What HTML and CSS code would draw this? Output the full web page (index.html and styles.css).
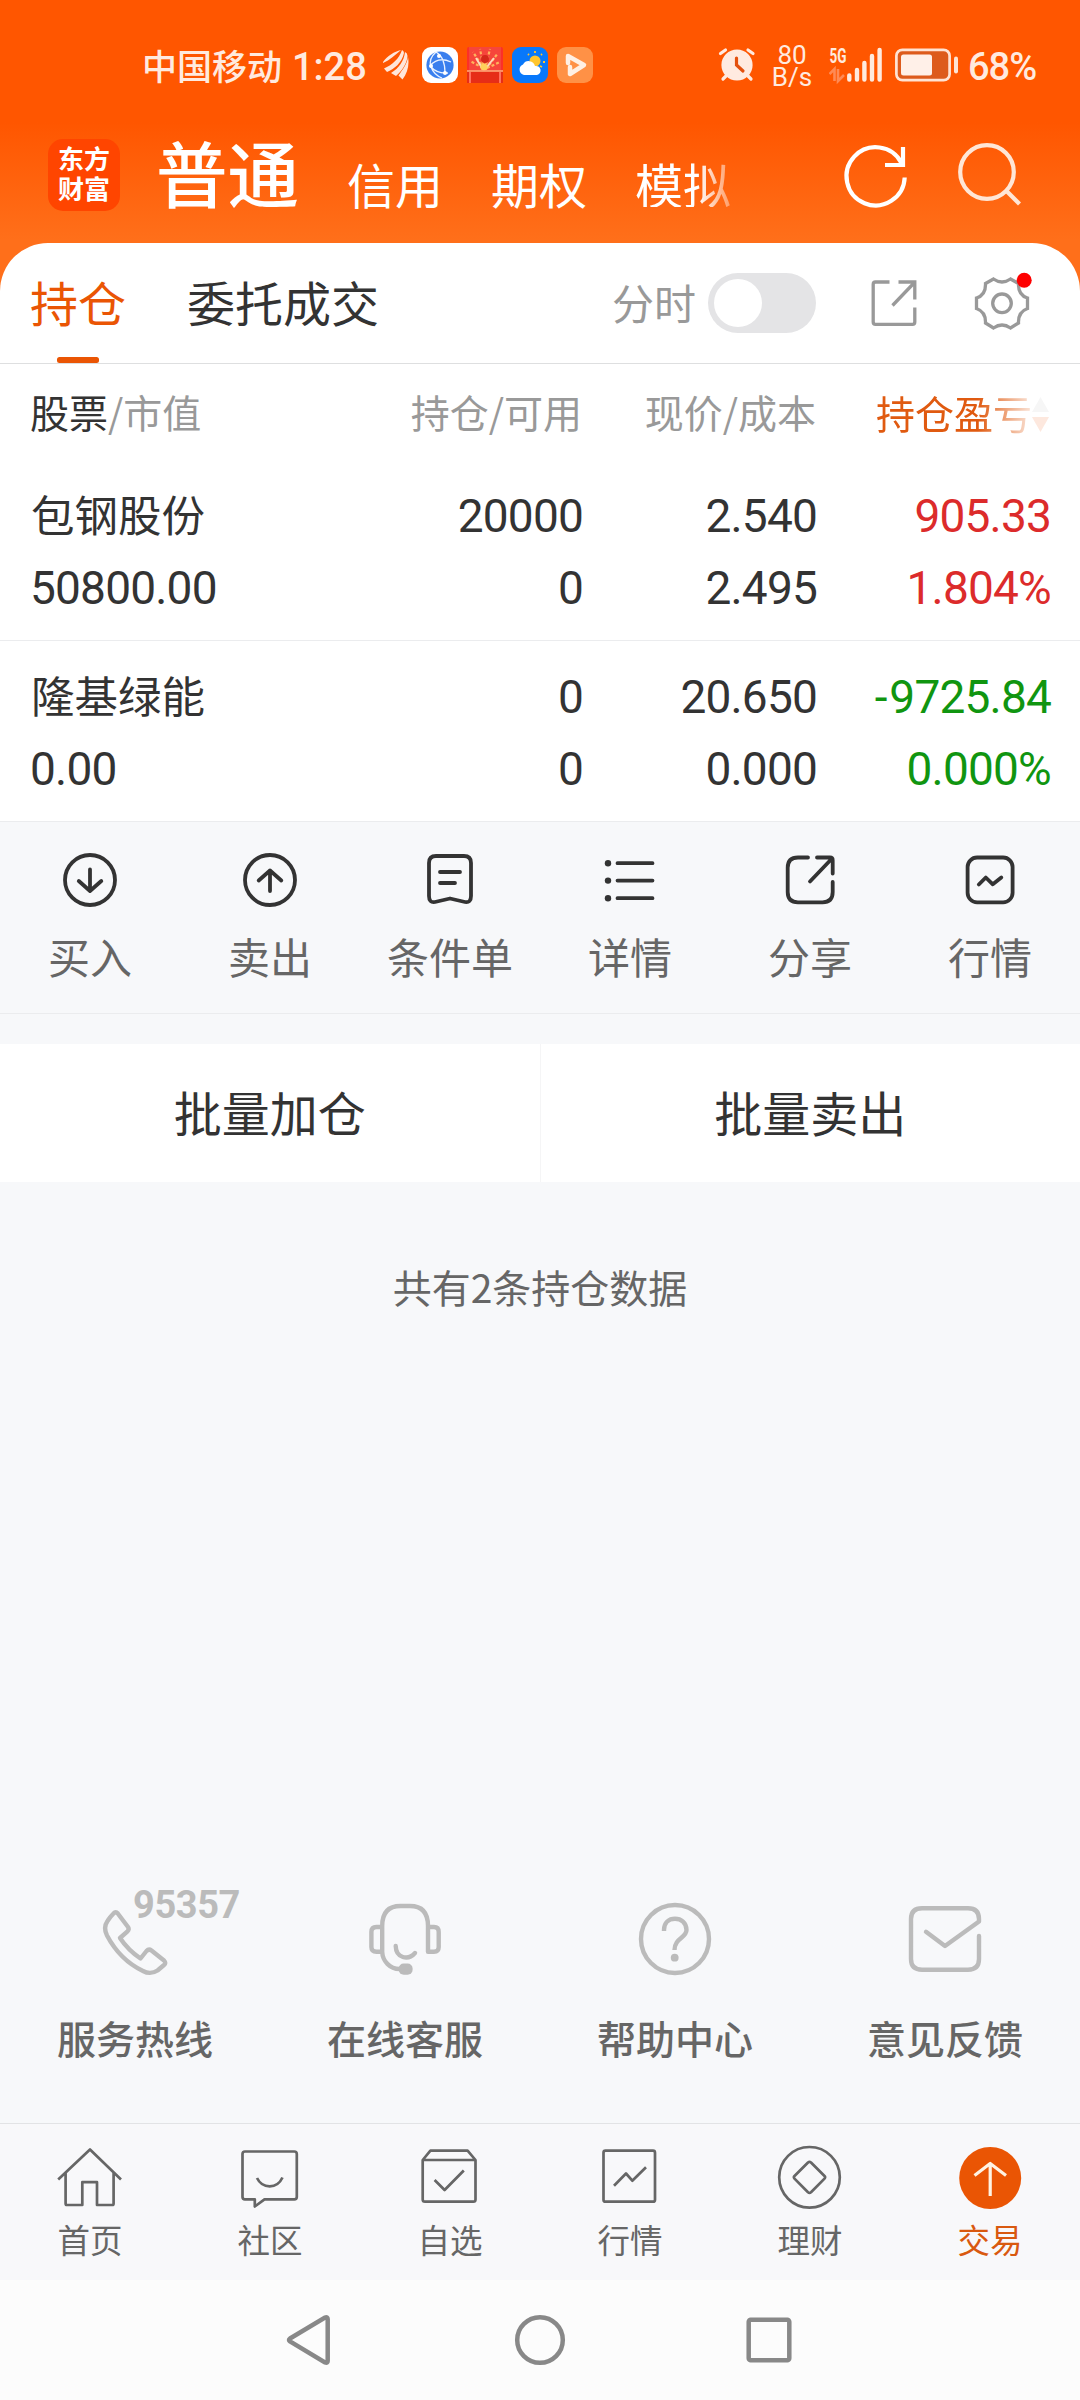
FILE: index.html
```html
<!DOCTYPE html>
<html lang="zh-CN">
<head>
<meta charset="utf-8">
<title>持仓</title>
<link rel="stylesheet" href="styles.css">
</head>
<body>
<div class="screen">
  <header class="top">
    <div class="status">
      <span class="carrier">中国移动</span>
      <span class="clock">1:28</span>
      <svg class="leaf" width="26" height="32" viewBox="383 50 26 32" fill="#ffe6da"><path d="M383 63C388 56 394 53 401 51C395 56 390 61 383 64Z"/><path d="M384 69.500C392 66 399 60 402 51Q404 52 404 54C402 64 394 70 387 73Z"/><path d="M391 74C399 69 404 62 405 53Q407.500 54 407.500 57C407 65 401 73 396 77Z"/><path d="M398.500 76.500C403 70 407 65 408 58C409.500 66 407.500 74 402.500 80.500Z"/></svg>
      <div class="apps">
        <svg width="36" height="36" viewBox="0 0 36 36"><rect width="36" height="36" rx="9" fill="#fff"/><circle cx="18" cy="18" r="13.6" fill="#3a7fee"/><path d="M14 5Q23 10 23 26M8 19Q16 9 29 15M8 19Q15 27 26 26M14 5Q6 12 9 20T20 31" fill="none" stroke="#e9f2ff" stroke-width="1.3"/><g fill="#fff"><circle cx="17" cy="9" r="2"/><circle cx="9" cy="19" r="2"/><circle cx="23" cy="26" r="2"/></g></svg>
        <svg width="36" height="36" viewBox="0 0 36 36"><rect width="36" height="36" rx="2" fill="#fb3029"/><path d="M2 0h32v24H2z" fill="#f6453b"/><path d="M17 22L6 5M17 22L13 2M18 22L23 2M19 22L31 6M16 21L3 14M20 21L33 15" stroke="#ffb35c" stroke-width="2.2" stroke-dasharray="3 2"/><path d="M15 21L9 11M19 21L27 11" stroke="#fdd9bd" stroke-width="2"/><circle cx="18" cy="12" r="4" fill="#d5281a"/><circle cx="17" cy="20" r="3.6" fill="#ffd05a"/><path d="M0 24h36v12H0z" fill="#e62d17"/><path d="M0 24h36" stroke="#ffae7d" stroke-width="1.5"/><path d="M3 25v11M33 25v11" stroke="#ff705d" stroke-width="2"/></svg>
        <svg width="36" height="36" viewBox="0 0 36 36"><rect width="36" height="36" rx="9" fill="#0878fb"/><circle cx="23" cy="14" r="5.5" fill="#ffc52e"/><path d="M23 6V4M29 8l1-1M31 15h2M17 8l-1-1M28 19l2 1" stroke="#ffc52e" stroke-width="1.8"/><path d="M12 28a5.500 5.500 0 0 1-1-10.500 6.500 6.500 0 0 1 12 1.500 4.600 4.600 0 0 1 2 9z" fill="#fff"/></svg>
        <svg width="36" height="36" viewBox="0 0 36 36"><rect width="36" height="36" rx="9" fill="#ff9146"/><path d="M11 16V9L27 18 13 27V20" fill="none" stroke="#fff0e4" stroke-width="4.5" stroke-linejoin="round" stroke-linecap="round"/></svg>
      </div>
      <div class="status-right">
        <svg width="38" height="36" viewBox="718 48 38 36" fill="#ffeae0" stroke-linecap="round"><circle cx="737" cy="66" r="15.600"/><path d="M720.500 54.500l5-3.500M753 54.500l-5-3.500M726 77l-3 3M748 77l3 3" stroke="#ffeae0" stroke-width="3.200"/><path d="M736.500 59v7l6.500 6" fill="none" stroke="#e4500e" stroke-width="3.200"/></svg>
        <div class="speed"><span>80</span><span>B/s</span></div>
        <svg class="signal" width="54" height="42" viewBox="829 44 54 42"><text x="829.500" y="62.700" class="net" textLength="17" lengthAdjust="spacingAndGlyphs">5G</text><path d="M829.500 74l5-5v12M838 69v12l6-6" fill="none" stroke="#ff8a55" stroke-width="2.600"/><path d="M849.300 75.500v4M857 70v9.500M864.400 63v16.500M872 56v23.500M879.600 50v29.500" stroke="#ffeade" stroke-width="4.400" stroke-linecap="round"/></svg>
        <svg class="battery" width="64" height="34" viewBox="895 48.500 64 34"><rect x="896.400" y="50.300" width="53.200" height="30.400" rx="6" fill="#dd5b1c" stroke="#ffe3d3" stroke-width="2.700"/><rect x="901" y="55" width="31" height="21" rx="2.500" fill="#fff0e8"/><rect x="954" y="57" width="4" height="17" rx="2" fill="#ffe3d3"/></svg>
        <span class="percent">68%</span>
      </div>
    </div>
    <div class="navrow">
      <div class="logo"><span>东方</span><span>财富</span></div>
      <nav class="accounts"><span class="current">普通</span><span>信用</span><span>期权</span><span class="fade">模拟</span></nav>
      <svg class="tools" width="200" height="100" viewBox="840 130 200 100" fill="none" stroke-width="4.200"><path d="M904.700 177.500A29.100 29.100 0 1 1 901.500 163M885 165H903V147" stroke="#fff"/><g stroke="#ffe6d6"><circle cx="987" cy="172" r="26.800"/><path d="M1006 190.500L1019.500 204"/></g></svg>
    </div>
  </header>

  <main class="panel">
    <div class="tabs">
      <span class="tab active">持仓</span>
      <span class="tab">委托成交</span>
      <span class="mini">分时</span>
      <span class="toggle"><i></i></span>
      <svg class="tabicons" width="172" height="80" viewBox="860 263 172 80" fill="none" stroke="#999" stroke-width="3.300"><path d="M889.500 282H875.500q-2.300 0-2.300 2.300v37.700q0 2.300 2.300 2.300h37q2.300 0 2.300-2.300V307.500M898.500 282h16.300v17.500M914 283L892.500 305.500"/><path d="M993.500 279Q1002 285 1010.500 279L1018.500 283.500Q1018 295 1027.500 298V308.500Q1018 312 1018.500 323L1010.500 328Q1002 322 993.500 328L985.500 323Q986 312 976.500 308.500V298Q986 295 985.500 283.500Z"/><circle cx="1002" cy="303.300" r="9.300"/><circle cx="1024.200" cy="280.300" r="7.500" fill="#fe0000" stroke="none"/></svg>
    </div>
    <div class="grid head">
      <span><b>股票</b>/市值</span><span>持仓/可用</span><span>现价/成本</span>
      <span class="sort"><em>持仓盈亏</em><svg width="17" height="36" viewBox="0 0 17 36"><path d="M8.500 0L17 15H0z" fill="#f6f6f6"/><path d="M0 20h17L8.500 35z" fill="#fde8de"/></svg></span>
    </div>
    <div class="grid stock">
      <span class="name">包钢股份</span><span>20000</span><span>2.540</span><span class="up">905.33</span>
      <span>50800.00</span><span>0</span><span>2.495</span><span class="up">1.804%</span>
    </div>
    <div class="grid stock">
      <span class="name">隆基绿能</span><span>0</span><span>20.650</span><span class="down"><i class="minus">-</i>9725.84</span>
      <span>0.00</span><span>0</span><span>0.000</span><span class="down">0.000%</span>
    </div>
  </main>

  <div class="actions">
    <div class="action"><svg viewBox="0 840 180 80"><circle cx="90" cy="880" r="25"/><path d="M90 869.500V890.500M78.800 881L90 891 101.300 881"/></svg><span>买入</span></div>
    <div class="action"><svg viewBox="180 840 180 80"><circle cx="270" cy="880" r="25"/><path d="M270 891V870.500M258.700 880.500L270 870.500 281.300 880.500"/></svg><span>卖出</span></div>
    <div class="action"><svg viewBox="360 840 180 80"><path d="M429 863q0-7 7-7h28q7 0 7 7v33q0 7-6 6l-15-3.500-15 3.500q-6 1-6-6zM440 872H460M440 883H455"/></svg><span>条件单</span></div>
    <div class="action"><svg viewBox="540 840 180 80"><path d="M617.500 863.200H652.500M617.500 880.600H652.500M617.500 898.200H652.500"/><g fill="#333" stroke="none"><circle cx="608" cy="863.200" r="3.200"/><circle cx="608" cy="880.600" r="3.200"/><circle cx="608" cy="898.200" r="3.200"/></g></svg><span>详情</span></div>
    <div class="action"><svg viewBox="720 840 180 80"><path d="M808 857.500H798q-10.300 0-10.300 10.300V892q0 10.300 10.300 10.300H822.500q10.200 0 10.200-10.300V882M817 857.500h13q2.700 0 2.700 2.700V873.500M831.500 859L810 881.500"/></svg><span>分享</span></div>
    <div class="action"><svg viewBox="900 840 180 80"><rect x="967.600" y="857.500" width="45" height="44.800" rx="9.500"/><path d="M978.800 884.500L985.800 877.500 992.800 884.300 1001.300 877.500"/></svg><span>行情</span></div>
  </div>

  <div class="batch"><span>批量加仓</span><span>批量卖出</span></div>
  <p class="summary">共有2条持仓数据</p>

  <div class="services">
    <div class="service"><svg viewBox="0 1880 270 120"><path d="M113.500 1913.500Q115.700 1911 117.800 1913.500L128 1927Q129.500 1929.500 127.500 1931.300L120 1938Q128 1950 140.500 1958.500L146.500 1951Q148.800 1948.500 151.500 1950.500L164 1960.500Q166.500 1963 164 1965L157.500 1970.500Q150.500 1975 143 1971Q120 1960 107 1935.500Q103 1927.500 107.500 1921Q110 1917 113.500 1913.500Z"/></svg><b class="hotline">95357</b><span>服务热线</span></div>
    <div class="service"><svg viewBox="270 1880 270 120"><path d="M382.200 1951.700V1926Q382.200 1906 400.500 1906H410Q428 1906 428 1926V1951.700H434Q438.700 1951.700 438.700 1947V1932Q438.700 1927 434 1927H428M382.200 1927H376.500Q371.400 1927 371.400 1932V1947Q371.400 1951.700 376.500 1951.700H382.200C382.500 1961 390 1969 399.500 1969M395.700 1946C396 1958 408 1961 415 1953"/><rect x="398.700" y="1963.600" width="13.900" height="11.200" rx="5" fill="#bbb" stroke="none"/></svg><span>在线客服</span></div>
    <div class="service"><svg viewBox="540 1880 270 120"><circle cx="675" cy="1939" r="34"/><path stroke-linecap="butt" d="M664 1931V1930C664 1922.500 669 1918.700 675 1918.700S686.500 1922.500 686.500 1930C686.500 1938 674.500 1938 674.500 1950"/><circle cx="674.700" cy="1957.700" r="3.900" fill="#bbb" stroke="none"/></svg><span>帮助中心</span></div>
    <div class="service"><svg viewBox="810 1880 270 120"><path d="M979 1936V1959Q979 1969.700 968 1969.700H922Q911 1969.700 911 1959V1919Q911 1908.200 922 1908.200H968Q979 1908.200 979 1919V1921.500L945 1946 926 1931.800"/></svg><span>意见反馈</span></div>
  </div>

  <nav class="bottom">
    <div class="item"><svg viewBox="0 2124 180 96"><path d="M58.200 2179.500L90 2149.500 121 2179.500M65.600 2173V2203.500Q65.600 2205 67 2205H82.300V2182.200H97V2205H112.200Q113.600 2205 113.600 2203.500V2173"/></svg><span>首页</span></div>
    <div class="item"><svg viewBox="180 2124 180 96"><path d="M245 2151.500H294.300Q296.800 2151.500 296.800 2154V2197Q296.800 2199.300 294.300 2199.300H264.500L254.800 2206.500V2199.300H245Q242.500 2199.300 242.500 2197V2154Q242.500 2151.500 245 2151.500ZM257 2178Q261 2186.300 269.700 2186.300T282.500 2177.500"/></svg><span>社区</span></div>
    <div class="item"><svg viewBox="360 2124 180 96"><path d="M422.700 2160L430.400 2150.700H467.600L475.500 2160V2199.500Q475.500 2201.700 473.300 2201.700H425Q422.700 2201.700 422.700 2199.500ZM422.700 2160H475.500M434.600 2180L444.600 2190 463.800 2170.500"/></svg><span>自选</span></div>
    <div class="item"><svg viewBox="540 2124 180 96"><rect x="603.500" y="2150.700" width="51.500" height="51" rx="2"/><path d="M614 2185.700L626 2173.500 632.300 2180.700 646 2167.200"/></svg><span>行情</span></div>
    <div class="item"><svg viewBox="720 2124 180 96"><circle cx="809.500" cy="2177.300" r="30.300"/><path d="M811 2162.500L824.500 2176Q825.700 2177.300 824.500 2178.600L811 2192.300Q809.500 2193.500 808 2192.300L794.500 2178.600Q793.300 2177.300 794.500 2176L808 2162.500Q809.500 2161.300 811 2162.500Z"/></svg><span>理财</span></div>
    <div class="item on"><svg viewBox="900 2124 180 96"><circle cx="990.200" cy="2178" r="31" fill="#ea5504" stroke="none"/><path stroke="#fff3e3" stroke-width="3.200" stroke-linecap="butt" d="M990.200 2163.500V2196M974.500 2175.500L990.200 2163.500 1006 2175.500"/></svg><span>交易</span></div>
  </nav>

  <div class="system">
    <svg width="50" height="60" viewBox="283 2310 50 60"><path d="M290 2338.500L325 2317.500Q327.700 2316.500 327.700 2319V2361Q327.700 2363.500 325 2362.500L290 2341.500Q288 2340 290 2338.500Z"/></svg>
    <svg width="60" height="60" viewBox="510 2310 60 60"><circle cx="540" cy="2340" r="22.800"/></svg>
    <svg width="50" height="60" viewBox="744 2310 50 60"><rect x="748.700" y="2319.700" width="40.600" height="40.600" rx="2"/></svg>
  </div>
</div>
</body>
</html>
```
FILE: styles.css
```css
* { box-sizing: border-box; }

body {
  margin: 0;
  font-family: "Noto Sans CJK SC", sans-serif;
  color: #333;
  background: #f7f8fa;
}

svg { display: block; flex: none; }

.screen {
  width: 1080px;
  height: 2400px;
  display: flex;
  flex-direction: column;
  overflow: hidden;
}

/* Orange header: also shows behind the panel's rounded corners */
.top {
  height: 303px;
  flex: none;
  background: linear-gradient(#ff5600 0, #ff5600 122px, #ff6f1a 240px);
}

.status {
  height: 130px;
  display: flex;
  align-items: center;
  padding: 0 43px 0 142px;
  color: #ffeadf;
  white-space: nowrap;
}
.carrier { font-size: 35px; font-weight: 500; line-height: 40px; width: 150px; }
.clock, .percent { font-family: Roboto, sans-serif; font-size: 38px; font-weight: 500; line-height: 40px; margin-top: 4px; }
.clock { width: 91px; }
.apps { display: flex; gap: 9px; margin-left: 13px; }
.status-right { margin-left: auto; display: flex; align-items: center; }
.speed {
  width: 46px;
  margin-left: 13px;
  display: flex;
  flex-direction: column;
  align-items: center;
  font-family: Roboto, sans-serif;
  font-size: 26px;
  line-height: 22px;
  margin-top: 2px;
}
.signal { margin-left: 14px; }
.net { font: bold 21px Roboto, sans-serif; fill: #ffeade; }
.battery { margin-left: 12px; }
.percent { width: 69px; margin-left: 9px; letter-spacing: -1px; }

.navrow { display: flex; align-items: flex-start; padding-left: 48px; color: #fff; }
.logo {
  width: 72px;
  height: 72px;
  margin-top: 9px;
  border-radius: 15px;
  background: #ff4500;
  display: flex;
  flex-direction: column;
  align-items: center;
  padding-top: 4px;
  font-size: 26px;
  font-weight: 700;
  line-height: 30px;
}
.accounts {
  height: 77px;
  width: 684px;
  display: flex;
  align-items: flex-end;
  gap: 48px;
  margin-left: 36px;
  font-size: 48px;
  line-height: 48px;
  white-space: nowrap;
}
.accounts .current { font-size: 71.5px; line-height: 72px; font-weight: 500; }
.fade { -webkit-mask-image: linear-gradient(90deg, #000 65%, rgba(0, 0, 0, .35)); mask-image: linear-gradient(90deg, #000 65%, rgba(0, 0, 0, .35)); }

.panel {
  flex: none;
  height: 579px;
  margin-top: -60px;
  background: #fff;
  border-radius: 48px 48px 0 0;
}

.tabs {
  height: 121px;
  display: flex;
  align-items: center;
  padding-left: 30px;
  border-bottom: 1px solid #dedfe0;
  font-size: 48px;
}
.tab { height: 120px; line-height: 117px; margin-right: 61px; white-space: nowrap; }
.active { color: #ea5504; width: 96px; display: flex; flex-direction: column; align-items: center; }
.active::after { content: ""; width: 42px; height: 6px; margin-top: -3px; border-radius: 2.5px; background: #ea5504; }
.mini { margin-left: 172px; font-size: 42px; line-height: 117px; height: 120px; color: #999; }
.toggle { width: 108px; height: 60px; margin-left: 12px; padding: 6px; border-radius: 30px; background: #e4e4e6; }
.toggle i { display: block; width: 48px; height: 48px; border-radius: 50%; background: #fff; }
.tabicons { margin-left: 44px; }

.grid {
  display: grid;
  grid-template-columns: 1fr 240px 234px 234px;
  padding: 0 29px 0 30px;
  text-align: right;
  white-space: nowrap;
}
.grid > span:nth-child(4n + 1) { text-align: left; }

.head { height: 96px; line-height: 95px; font-size: 39px; color: #999; }
.head > span { padding-right: 1px; }
.head b { font-weight: 400; color: #333; }
.head .sort { display: flex; justify-content: flex-end; align-items: center; padding-right: 2px; }
.sort em {
  font-style: normal;
  color: #e05a10;
  -webkit-mask-image: linear-gradient(90deg, #000 65%, rgba(0, 0, 0, .2) 98%);
  mask-image: linear-gradient(90deg, #000 65%, rgba(0, 0, 0, .2) 98%);
}
.sort svg { margin-top: 5px; }

.stock {
  height: 181px;
  padding-top: 20px;
  grid-auto-rows: 72px;
  font-family: Roboto, sans-serif;
  font-size: 46px;
  line-height: 72px;
  letter-spacing: -.8px;
  border-bottom: 1px solid #ebecee;
}
.stock .name { font-family: "Noto Sans CJK SC", sans-serif; font-size: 43.5px; line-height: 68px; letter-spacing: 0; padding-left: 1px; }
.minus { font-style: normal; letter-spacing: 2px; }
.up { color: #dc2b2b; }
.down { color: #109510; }

.actions {
  height: 192px;
  flex: none;
  display: flex;
  border-bottom: 1px solid #ebecee;
  background: #f7f8fa;
  padding-top: 18px;
}
.action { width: 180px; text-align: center; font-size: 42px; line-height: 56px; color: #666; }
.action svg { width: 180px; height: 80px; margin-bottom: 8px; fill: none; stroke: #333; stroke-width: 3.8; stroke-linecap: round; stroke-linejoin: round; }
.action span, .service span, .item span { display: block; }

.batch {
  height: 138px;
  flex: none;
  margin-top: 30px;
  display: flex;
  background: #fff;
  font-size: 48px;
  line-height: 135px;
  text-align: center;
}
.batch span { flex: 1; }
.batch span + span { border-left: 1px solid #f5f5f6; }

.summary { margin: 79px 0 0; font-size: 39px; line-height: 50px; text-align: center; color: #666; }

.services { margin-top: auto; display: flex; flex: none; height: 243px; }
.service { position: relative; width: 270px; text-align: center; font-size: 39px; line-height: 50px; font-weight: 500; color: #666; }
.service svg { width: 270px; height: 120px; margin-bottom: 12px; fill: none; stroke: #bbb; stroke-width: 4.4; stroke-linecap: round; stroke-linejoin: round; }
.hotline {
  position: absolute;
  left: 133px;
  top: 10px;
  font: bold 38px/30px Roboto, sans-serif;
  letter-spacing: -.4px;
  color: #bbb;
}

.bottom {
  height: 157px;
  flex: none;
  display: flex;
  border-top: 1px solid #e2e3e5;
  background: #f8f8fa;
}
.item { width: 180px; text-align: center; font-size: 32.5px; line-height: 32px; color: #666; }
.item svg { width: 180px; height: 96px; margin-bottom: 3px; fill: none; stroke: #666; stroke-width: 2.7; stroke-linejoin: round; }
.on { color: #d9590f; }

.system { height: 120px; flex: none; display: flex; align-items: center; background: #fcfcfc; padding-left: 283px; }
.system svg { fill: none; stroke: #888; stroke-width: 4.5; }
.system svg:nth-child(2) { margin-left: 177px; }
.system svg:nth-child(3) { margin-left: 174px; }
```
